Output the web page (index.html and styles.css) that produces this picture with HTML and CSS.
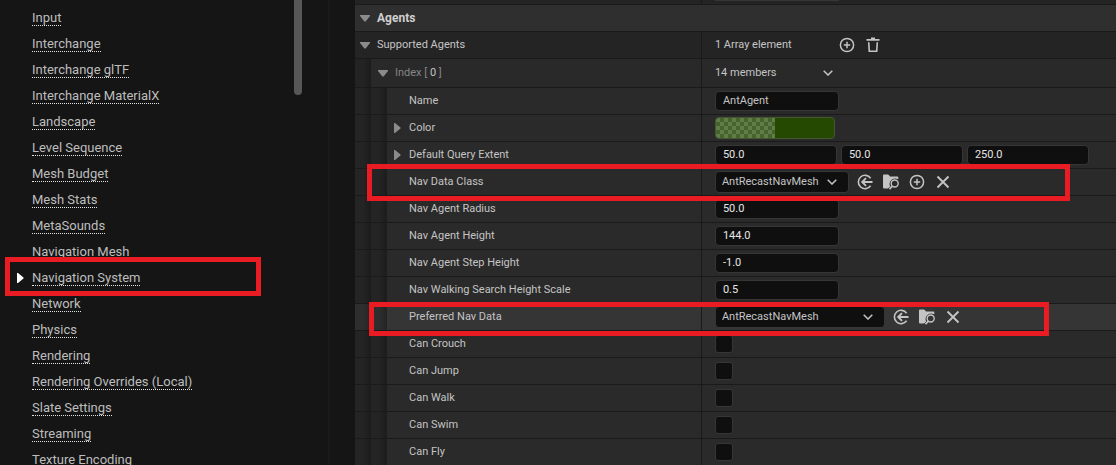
FILE: index.html
```html
<!DOCTYPE html>
<html lang="en">
<head>
<meta charset="utf-8">
<title>Project Settings - Navigation System</title>
<link rel="stylesheet" href="styles.css">
</head>
<body>
<svg class="defs" aria-hidden="true">
  <symbol id="down" viewBox="0 0 10 7"><path d="M0 0H10V1L5.600 6.500H4.400L0 1Z" fill="currentColor"/></symbol>
  <symbol id="right" viewBox="0 0 7 10"><path d="M0 0H1L6.500 4.400V5.600L1 10H0Z" fill="currentColor"/></symbol>
  <symbol id="chevron" viewBox="0 0 10 6"><path d="M.7.7 5 5 9.300.7" fill="none" stroke="currentColor" stroke-width="1.500"/></symbol>
  <symbol id="add" viewBox="0 0 16 16"><g fill="none" stroke="currentColor" stroke-width="1.500"><circle cx="8" cy="8" r="6.600"/><path d="M8 4.800V11.200M4.800 8H11.200"/></g></symbol>
  <symbol id="trash" viewBox="0 0 16 16"><path d="M6 0.500H10V2H14.500V3.800H1.500V2H6Z" fill="currentColor"/><path d="M3.700 5.300 4.300 14.200H11.700L12.300 5.300" fill="none" stroke="currentColor" stroke-width="1.600"/></symbol>
  <symbol id="use" viewBox="0 0 16 16"><g fill="none" stroke="currentColor" stroke-width="1.600"><path d="M13.600 4.200A6.700 6.700 0 1 0 13.600 11.800"/><path d="M15.500 8H5.200M9 4.200 5.200 8 9 11.800" stroke-width="1.900"/></g></symbol>
  <symbol id="browse" viewBox="0 0 16 16"><path d="M0 1.500Q0 .5 1 .5H4.800Q5.500.5 6 1.200L7 2.500H14.500Q15.300 2.500 15.300 3.500V5.200Q10.500 3.200 7.700 6.700 5.600 10 7.300 12.400L5 14.500H1Q0 14.500 0 13.500Z" fill="currentColor"/><circle cx="11.700" cy="9.500" r="3.500" fill="none" stroke="currentColor" stroke-width="1.400"/><path d="M9.300 12.100 6.500 15.300" stroke="currentColor" stroke-width="1.700"/></symbol>
  <symbol id="clear" viewBox="0 0 16 16"><path d="M2.500 2.500 13.500 13.500M13.500 2.500 2.500 13.500" stroke="currentColor" stroke-width="1.900"/></symbol>
</svg>
<div class="app">
  <nav class="sections" aria-label="Settings sections">
    <ul class="section-list">
      <li><a href="#">Input</a></li>
      <li><a href="#">Interchange</a></li>
      <li><a href="#">Interchange glTF</a></li>
      <li><a href="#">Interchange MaterialX</a></li>
      <li><a href="#">Landscape</a></li>
      <li><a href="#">Level Sequence</a></li>
      <li><a href="#">Mesh Budget</a></li>
      <li><a href="#">Mesh Stats</a></li>
      <li><a href="#">MetaSounds</a></li>
      <li><a href="#">Navigation Mesh</a></li>
      <li class="current"><svg class="marker"><use href="#right"/></svg><a href="#" aria-current="page">Navigation System</a><span class="callout callout-nav"></span></li>
      <li><a href="#">Network</a></li>
      <li><a href="#">Physics</a></li>
      <li><a href="#">Rendering</a></li>
      <li><a href="#">Rendering Overrides (Local)</a></li>
      <li><a href="#">Slate Settings</a></li>
      <li><a href="#">Streaming</a></li>
      <li><a href="#">Texture Encoding</a></li>
    </ul>
    <div class="scroll-thumb"></div>
  </nav>
  <main class="details">
    <div class="row stub"><div class="name"></div><div class="value"><span class="stub-field"></span></div></div>
    <div class="row category"><div class="name"><button class="expander" aria-label="Collapse Agents"><svg class="down"><use href="#down"/></svg></button><h2>Agents</h2></div></div>
    <div class="row level-0"><div class="name"><button class="expander" aria-label="Collapse Supported Agents"><svg class="down"><use href="#down"/></svg></button><span>Supported Agents</span></div>
      <div class="value"><span class="summary">1 Array element</span><div class="actions"><button aria-label="Add element"><svg><use href="#add"/></svg></button><button aria-label="Remove all elements"><svg><use href="#trash"/></svg></button></div></div></div>
    <div class="row level-1"><div class="name"><i class="indent"></i><button class="expander" aria-label="Collapse index 0"><svg class="down"><use href="#down"/></svg></button><span class="index">Index [ <b>0</b> ]</span></div>
      <div class="value"><span class="summary">14 members</span><button class="menu" aria-label="Element options"><svg class="chevron"><use href="#chevron"/></svg></button></div></div>
    <div class="row"><div class="name"><i class="indent"></i><i class="indent"></i><label class="leaf" for="name">Name</label></div>
      <div class="value"><input class="field soft" id="name" type="text" value="AntAgent"></div></div>
    <div class="row"><div class="name"><i class="indent"></i><i class="indent"></i><button class="expander" aria-label="Expand Color"><svg class="right"><use href="#right"/></svg></button><span>Color</span></div>
      <div class="value"><button class="swatch" aria-label="Color"></button></div></div>
    <div class="row"><div class="name"><i class="indent"></i><i class="indent"></i><button class="expander" aria-label="Expand Default Query Extent"><svg class="right"><use href="#right"/></svg></button><label for="extent-x">Default Query Extent</label></div>
      <div class="value vector"><input class="field" id="extent-x" type="text" value="50.0"><input class="field" type="text" aria-label="Extent Y" value="50.0"><input class="field" type="text" aria-label="Extent Z" value="250.0"></div></div>
    <div class="row"><div class="name"><i class="indent"></i><i class="indent"></i><label class="leaf" for="nav-class">Nav Data Class</label></div>
      <div class="value"><div class="combo"><select id="nav-class"><option>AntRecastNavMesh</option></select><svg class="chevron"><use href="#chevron"/></svg></div><div class="actions"><button aria-label="Use selected"><svg><use href="#use"/></svg></button><button aria-label="Browse"><svg><use href="#browse"/></svg></button><button aria-label="Create new"><svg><use href="#add"/></svg></button><button aria-label="Clear"><svg><use href="#clear"/></svg></button></div></div><span class="callout callout-class"></span></div>
    <div class="row"><div class="name"><i class="indent"></i><i class="indent"></i><label class="leaf" for="radius">Nav Agent Radius</label></div>
      <div class="value"><input class="field" id="radius" type="text" value="50.0"></div></div>
    <div class="row"><div class="name"><i class="indent"></i><i class="indent"></i><label class="leaf" for="height">Nav Agent Height</label></div>
      <div class="value"><input class="field" id="height" type="text" value="144.0"></div></div>
    <div class="row"><div class="name"><i class="indent"></i><i class="indent"></i><label class="leaf" for="step">Nav Agent Step Height</label></div>
      <div class="value"><input class="field" id="step" type="text" value="-1.0"></div></div>
    <div class="row"><div class="name"><i class="indent"></i><i class="indent"></i><label class="leaf" for="scale">Nav Walking Search Height Scale</label></div>
      <div class="value"><input class="field" id="scale" type="text" value="0.5"></div></div>
    <div class="row hovered"><div class="name"><i class="indent"></i><i class="indent"></i><label class="leaf" for="preferred">Preferred Nav Data</label></div>
      <div class="value"><div class="combo wide"><select id="preferred"><option>AntRecastNavMesh</option></select><svg class="chevron"><use href="#chevron"/></svg></div><div class="actions"><button aria-label="Use selected"><svg><use href="#use"/></svg></button><button aria-label="Browse"><svg><use href="#browse"/></svg></button><button aria-label="Clear"><svg><use href="#clear"/></svg></button></div></div><span class="callout callout-preferred"></span></div>
    <div class="row"><div class="name"><i class="indent"></i><i class="indent"></i><label class="leaf" for="crouch">Can Crouch</label></div><div class="value"><input id="crouch" type="checkbox"></div></div>
    <div class="row"><div class="name"><i class="indent"></i><i class="indent"></i><label class="leaf" for="jump">Can Jump</label></div><div class="value"><input id="jump" type="checkbox"></div></div>
    <div class="row"><div class="name"><i class="indent"></i><i class="indent"></i><label class="leaf" for="walk">Can Walk</label></div><div class="value"><input id="walk" type="checkbox"></div></div>
    <div class="row"><div class="name"><i class="indent"></i><i class="indent"></i><label class="leaf" for="swim">Can Swim</label></div><div class="value"><input id="swim" type="checkbox"></div></div>
    <div class="row"><div class="name"><i class="indent"></i><i class="indent"></i><label class="leaf" for="fly">Can Fly</label></div><div class="value"><input id="fly" type="checkbox"></div></div>
  </main>
</div>
</body>
</html>
```
FILE: styles.css
```css
* { box-sizing: border-box; }
body {
  margin: 0;
  background: #151515;
  color: #c4c4c4;
  font: 11px/16px Roboto, "Liberation Sans", sans-serif;
}
button, input, select { font: inherit; color: inherit; margin: 0; padding: 0; border: 0; background: none; }
button { display: flex; align-items: center; justify-content: center; }
svg { display: block; width: 16px; height: 16px; }
.defs { position: absolute; width: 0; height: 0; }
.app { display: flex; height: 100vh; overflow: hidden; }

.sections {
  flex: none;
  display: flex;
  align-items: flex-start;
  width: 330px;
  padding-right: 26px;
  border-right: 2px solid #1a1a1a;
}
.section-list { flex: 1; margin: 0; padding: 5px 0 0; list-style: none; font-size: 13px; }
.section-list li { position: relative; display: flex; align-items: center; height: 26px; padding-left: 32px; }
.section-list a { line-height: 15px; color: #bdbdbd; text-decoration: none; border-bottom: 1px dotted #e4e4e4; }
.section-list .current { padding-left: 17px; }
.marker { width: 7px; height: 10px; margin-right: 8px; color: #fff; }
.scroll-thumb { width: 8px; height: 95px; border-radius: 0 0 4px 4px; background: #575757; }

.details { flex: 1; min-width: 0; margin-left: 25px; }
.row {
  position: relative;
  display: grid;
  grid-template-columns: 5fr 6fr;
  height: 27px;
  background: #2a2a2a;
  border-bottom: 1px solid #1a1a1a;
}
.stub { height: 5px; background: #242424; }
.stub-field { align-self: flex-start; width: 124px; height: 1px; background: #363636; }
.category { background: #2f2f2f; }
.level-0 { background: #242424; }
.level-1 { height: 29px; background: #292929; }
.hovered { background: #353535; }
.name { display: flex; align-items: center; min-width: 0; }
.name h2 { margin: 0; font-size: 12px; line-height: 16px; color: #cfcfcf; }
.name span, .name label, .summary { padding-bottom: 1px; }
.value { display: flex; align-items: center; min-width: 0; padding-left: 13px; border-left: 1px solid #1a1a1a; }
.indent { align-self: stretch; width: 16px; background: linear-gradient(to right, rgba(0,0,0,.14) 50%, rgba(0,0,0,.34)); }
.expander { width: 22px; height: 20px; padding-right: 2px; color: #8b8b8b; }
.level-1 .expander { width: 24px; padding-right: 0; }
.name .leaf { padding-left: 22px; }
.down { width: 10px; height: 7px; }
.right { width: 7px; height: 10px; }
.index { color: #868686; }
.index b { color: #c4c4c4; font-weight: 400; }
.summary { width: 103px; }
.menu { width: 20px; height: 20px; }
.chevron { width: 10px; height: 6px; }
.field {
  width: 124px;
  height: 20px;
  padding: 0 7px 1px;
  border: 1px solid #363636;
  border-radius: 4px;
  background: #0f0f0f;
  color: #e6e6e6;
}
.soft { color: #c4c4c4; }
.vector { gap: 4px; }
.vector .field { width: 122px; }
.swatch {
  width: 120px;
  height: 22px;
  border: 1px solid #44572f;
  border-radius: 4px;
  background:
    linear-gradient(to right, transparent 50%, #264902 50%),
    repeating-conic-gradient(#45632b 0 25%, #5f7c49 0 50%) 0 0 / 8px 8px;
}
.combo { display: grid; align-items: center; width: 134px; }
.combo.wide { width: 170px; }
.combo select {
  grid-area: 1 / 1;
  appearance: none;
  width: 100%;
  height: 22px;
  padding: 0 24px 1px 6px;
  border: 1px solid #363636;
  border-radius: 4px;
  background: #0f0f0f;
}
.combo .chevron { grid-area: 1 / 1; justify-self: end; margin-right: 12px; pointer-events: none; }
.actions { display: flex; gap: 10px; margin-left: 8px; }
.summary + .actions { margin-left: 21px; }
input[type="checkbox"] { appearance: none; width: 18px; height: 18px; border: 1px solid #363636; border-radius: 3px; background: #0f0f0f; }

.callout { position: absolute; z-index: 1; border: 5px solid #e91c24; pointer-events: none; }
.callout-nav { top: -8px; left: 5px; width: 256px; height: 39px; }
.callout-class { top: -5px; left: 12px; right: 46px; height: 37px; }
.callout-preferred { top: -2px; left: 14px; right: 67px; height: 34px; }
```
